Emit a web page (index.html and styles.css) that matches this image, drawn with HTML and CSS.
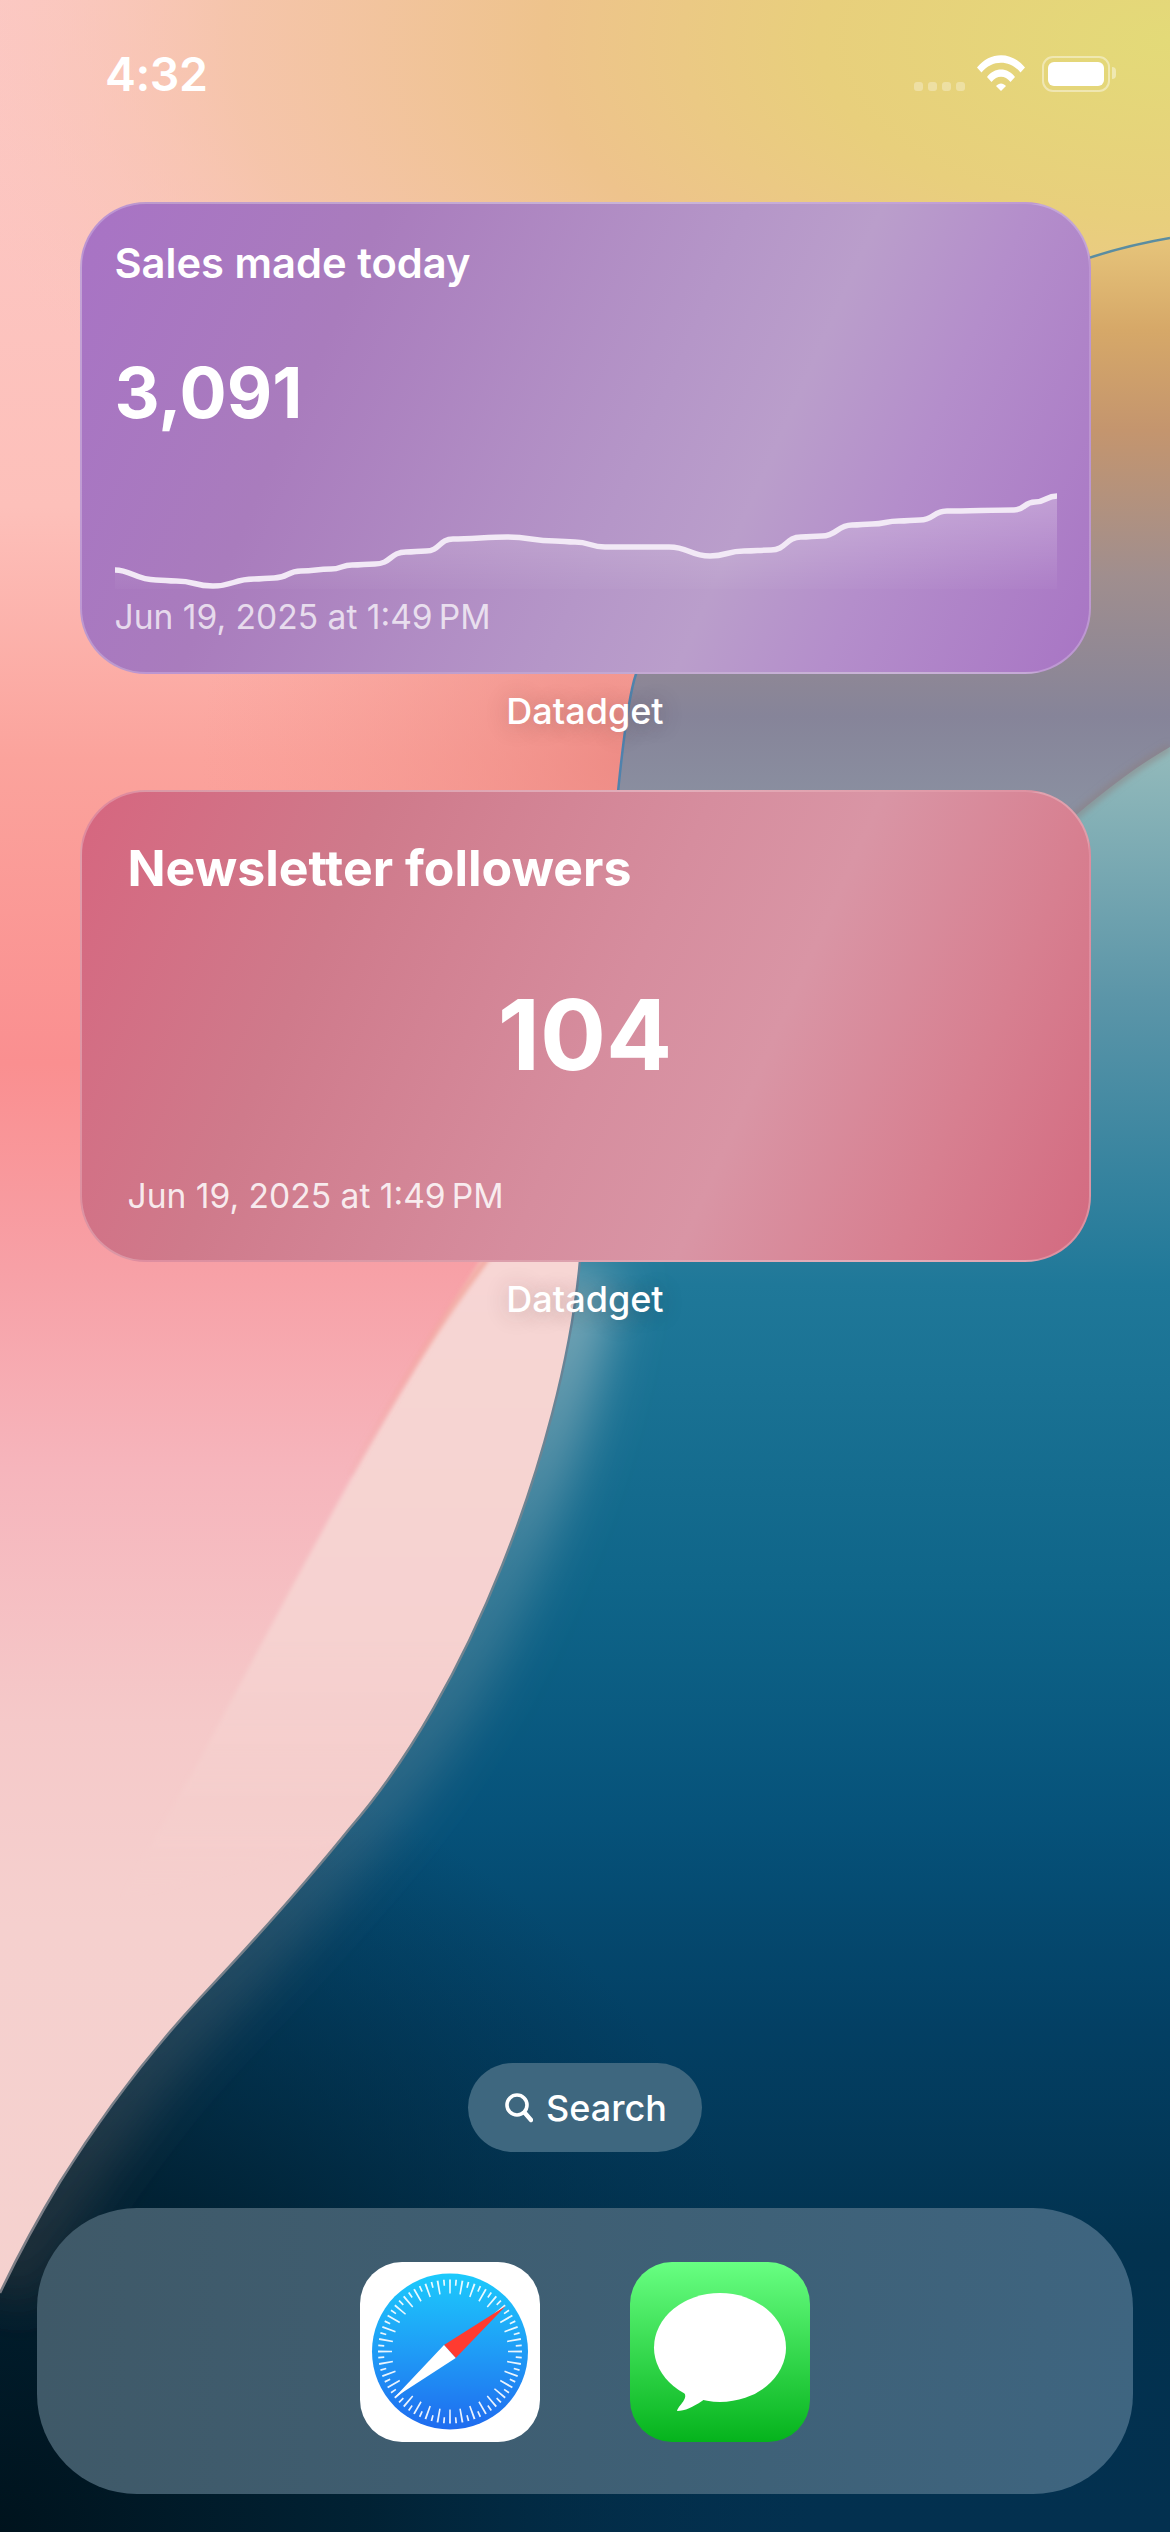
FILE: index.html
```html
<!DOCTYPE html>
<html lang="en">
<head>
<meta charset="utf-8">
<title>Home Screen</title>
<link rel="stylesheet" href="styles.css">
</head>
<body>
<main class="screen">
  <svg class="wallpaper" viewBox="0 0 1170 2532" aria-hidden="true">
    <defs>
      <linearGradient id="pinkV" x1="0" y1="0" x2="0" y2="2532" gradientUnits="userSpaceOnUse">
        <stop offset="0" stop-color="#fcc9c6"/>
        <stop offset="0.2" stop-color="#fdc0ba"/>
        <stop offset="0.3" stop-color="#fba39c"/>
        <stop offset="0.42" stop-color="#fa8f90"/>
        <stop offset="0.5" stop-color="#f7a0a6"/>
        <stop offset="0.58" stop-color="#f6b5bc"/>
        <stop offset="0.68" stop-color="#f5c9c9"/>
        <stop offset="0.76" stop-color="#f5d0ce"/>
        <stop offset="1" stop-color="#f5d2cf"/>
      </linearGradient>
      <radialGradient id="sun" cx="0" cy="0" r="1" gradientUnits="userSpaceOnUse" gradientTransform="translate(1170 40) scale(1250 640)">
        <stop offset="0" stop-color="#e3da78"/>
        <stop offset="0.28" stop-color="#e8cf7c"/>
        <stop offset="0.5" stop-color="#eec38c"/>
        <stop offset="0.75" stop-color="#f4c4a6" stop-opacity="0.85"/>
        <stop offset="1" stop-color="#fbc6bc" stop-opacity="0"/>
      </radialGradient>
      <radialGradient id="salmon" cx="620" cy="760" r="420" gradientUnits="userSpaceOnUse">
        <stop offset="0" stop-color="#ea857f" stop-opacity="0.75"/>
        <stop offset="1" stop-color="#f59a90" stop-opacity="0"/>
      </radialGradient>
      <linearGradient id="bandV" x1="0" y1="240" x2="0" y2="800" gradientUnits="userSpaceOnUse">
        <stop offset="0" stop-color="#e6c47a"/>
        <stop offset="0.16" stop-color="#d6a868"/>
        <stop offset="0.34" stop-color="#c4956e"/>
        <stop offset="0.6" stop-color="#a08e8e"/>
        <stop offset="0.85" stop-color="#868499"/>
        <stop offset="1" stop-color="#8a8fa0"/>
      </linearGradient>
      <linearGradient id="blueV" x1="0" y1="750" x2="0" y2="2532" gradientUnits="userSpaceOnUse">
        <stop offset="0" stop-color="#93babb"/>
        <stop offset="0.14" stop-color="#5b95a8"/>
        <stop offset="0.3" stop-color="#1f7899"/>
        <stop offset="0.47" stop-color="#0f6589"/>
        <stop offset="0.6" stop-color="#06527a"/>
        <stop offset="0.72" stop-color="#033f63"/>
        <stop offset="0.84" stop-color="#02324f"/>
        <stop offset="1" stop-color="#03304f"/>
      </linearGradient>
      <radialGradient id="corner" cx="0" cy="2532" r="820" gradientUnits="userSpaceOnUse">
        <stop offset="0" stop-color="#00131d"/>
        <stop offset="0.45" stop-color="#012031" stop-opacity="0.9"/>
        <stop offset="1" stop-color="#02304c" stop-opacity="0"/>
      </radialGradient>
      <linearGradient id="glow" x1="0" y1="1250" x2="0" y2="2293" gradientUnits="userSpaceOnUse">
        <stop offset="0" stop-color="#b8cccf" stop-opacity="0.7"/>
        <stop offset="0.3" stop-color="#a4b8c0" stop-opacity="0.32"/>
        <stop offset="0.6" stop-color="#8a8c90" stop-opacity="0.26"/>
        <stop offset="1" stop-color="#4c4646" stop-opacity="0.4"/>
      </linearGradient>
      <linearGradient id="edge" x1="0" y1="240" x2="0" y2="2293" gradientUnits="userSpaceOnUse">
        <stop offset="0" stop-color="#5b8da0"/>
        <stop offset="0.25" stop-color="#4f82ad"/>
        <stop offset="0.6" stop-color="#6c8492"/>
        <stop offset="1" stop-color="#7c7c84"/>
      </linearGradient>
      <linearGradient id="ridgeFill" x1="0" y1="1250" x2="0" y2="1900" gradientUnits="userSpaceOnUse">
        <stop offset="0" stop-color="#f7d6d4"/>
        <stop offset="0.6" stop-color="#f6d2d0"/>
        <stop offset="1" stop-color="#f5d2cf" stop-opacity="0"/>
      </linearGradient>
      <linearGradient id="ridgeEdge" x1="0" y1="1250" x2="0" y2="1560" gradientUnits="userSpaceOnUse">
        <stop offset="0" stop-color="#f09a8e" stop-opacity="0.75"/>
        <stop offset="1" stop-color="#f4b4b4" stop-opacity="0"/>
      </linearGradient>
      <filter id="soft" x="-30%" y="-30%" width="160%" height="160%"><feGaussianBlur stdDeviation="26"/></filter>
      <filter id="softer" x="-30%" y="-30%" width="160%" height="160%"><feGaussianBlur stdDeviation="3"/></filter>
      <filter id="faint" x="-10%" y="-10%" width="120%" height="120%"><feGaussianBlur stdDeviation="2"/></filter>
      <clipPath id="deep">
        <path d="M1170 238C990 268 745 410 636 674C615 735 600 1050 579 1271C560 1450 470 1690 350 1828C300 1890 250 1945 200 1998C150 2052 100 2118 60 2182C40 2215 18 2255 0 2293V2532H1170Z"/>
      </clipPath>
    </defs>
    <rect width="1170" height="2532" fill="url(#pinkV)"/>
    <rect width="1170" height="900" fill="url(#sun)"/>
    <rect y="300" width="1170" height="900" fill="url(#salmon)"/>
    <path d="M495 1240C400 1380 290 1590 200 1760L120 1900L500 1800L640 1240Z" fill="url(#ridgeFill)" filter="url(#faint)"/>
    <path d="M495 1248C440 1320 395 1395 350 1475" fill="none" stroke="url(#ridgeEdge)" stroke-width="6" filter="url(#faint)"/>
    <g clip-path="url(#deep)">
      <rect width="1170" height="2532" fill="url(#bandV)"/>
      <path d="M1170 747C1130 770 1100 795 1070 820C1000 870 700 950 400 1200L0 1600V2532H1170Z" fill="url(#blueV)"/>
      <path d="M1170 747C1130 770 1100 795 1070 820" fill="none" stroke="#8a7d80" stroke-width="8" stroke-opacity="0.55" filter="url(#softer)"/>
      <rect y="1700" width="1170" height="832" fill="url(#corner)"/>
      <path d="M579 1271C560 1450 470 1690 350 1828C300 1890 250 1945 200 1998C150 2052 100 2118 60 2182C40 2215 18 2255 0 2293" fill="none" stroke="url(#glow)" stroke-width="70" filter="url(#soft)"/>
    </g>
    <path d="M1170 238C990 268 745 410 636 674C615 735 600 1050 579 1271C560 1450 470 1690 350 1828C300 1890 250 1945 200 1998C150 2052 100 2118 60 2182C40 2215 18 2255 0 2293" fill="none" stroke="url(#edge)" stroke-width="2.5"/>
  </svg>

  <header class="status">
    <span class="time">4:32</span>
    <div class="status-icons">
      <div class="signal"><i></i><i></i><i></i><i></i></div>
      <svg class="wifi" viewBox="0 0 48 36" aria-hidden="true">
        <path d="M0 12.5C13-4 35-4 48 12.5L43.5 17.5C33 4.5 15 4.5 4.5 17.5Z"/>
        <path d="M10 22C17 12 31 12 38 22L33.5 27C28 20 20 20 14.5 27Z"/>
        <path d="M19 31C22 27.5 26 27.5 29 31L24 36Z"/>
      </svg>
      <div class="battery"><div class="battery-level"></div></div>
    </div>
  </header>

  <section class="widgets">
    <article class="widget-block">
      <div class="card card-sales">
        <h2 class="sales-title">Sales made today</h2>
        <p class="sales-value">3,091</p>
        <svg class="chart" viewBox="114 490 942 100" aria-hidden="true">
          <defs>
            <linearGradient id="areaFill" x1="0" y1="497" x2="0" y2="590" gradientUnits="userSpaceOnUse">
              <stop offset="0" stop-color="#fff" stop-opacity="0.26"/>
              <stop offset="1" stop-color="#fff" stop-opacity="0.02"/>
            </linearGradient>
          </defs>
          <path fill="url(#areaFill)" d="M114 571C130 571 135 581 155 581C165 581 165 582 175 582C195 582 192 587 212 587C232 587 233 580 253 580C263 580 263 579 273 579C287 579 286 572 300 572C315 572 315 570 330 570C340 570 341 566 351 566C362 566 363 565 374 565C390 565 389 553 405 553C415 553 415 552 425 552C439 552 438 540 452 540C470 540 488 538 506 538C530 538 530 542 554 542C564 542 564 543 574 543C589 543 589 548 604 548C625 548 647 548 668 548C688 548 689 557 709 557C726 557 726 552 743 552C757 552 756 551 770 551C785 551 785 538 800 538C810 538 811 537 821 537C836 537 836 526 851 526C861 526 861 525 871 525C885 525 884 522 898 522C908 522 909 521 919 521C933 521 932 512 946 512C968 512 991 511 1013 511C1024 511 1023 503 1034 503C1045 503 1045 497 1056 497V590H114Z"/>
          <path fill="none" stroke="#f2e9f6" stroke-width="5.5" d="M114 571C130 571 135 581 155 581C165 581 165 582 175 582C195 582 192 587 212 587C232 587 233 580 253 580C263 580 263 579 273 579C287 579 286 572 300 572C315 572 315 570 330 570C340 570 341 566 351 566C362 566 363 565 374 565C390 565 389 553 405 553C415 553 415 552 425 552C439 552 438 540 452 540C470 540 488 538 506 538C530 538 530 542 554 542C564 542 564 543 574 543C589 543 589 548 604 548C625 548 647 548 668 548C688 548 689 557 709 557C726 557 726 552 743 552C757 552 756 551 770 551C785 551 785 538 800 538C810 538 811 537 821 537C836 537 836 526 851 526C861 526 861 525 871 525C885 525 884 522 898 522C908 522 909 521 919 521C933 521 932 512 946 512C968 512 991 511 1013 511C1024 511 1023 503 1034 503C1045 503 1045 497 1056 497"/>
        </svg>
        <p class="date date-sales">Jun 19, 2025 at 1:49&#8239;PM</p>
      </div>
      <p class="widget-label">Datadget</p>
    </article>

    <article class="widget-block">
      <div class="card card-news">
        <h2 class="news-title">Newsletter followers</h2>
        <p class="news-value">104</p>
        <p class="date date-news">Jun 19, 2025 at 1:49&#8239;PM</p>
      </div>
      <p class="widget-label">Datadget</p>
    </article>
  </section>

  <div class="search">
    <svg class="search-icon" viewBox="0 0 28 30" aria-hidden="true">
      <circle cx="12" cy="12" r="10" fill="none" stroke="#fff" stroke-width="3.6"/>
      <path d="M19.5 19.5L26 27" fill="none" stroke="#fff" stroke-width="4.4" stroke-linecap="round"/>
    </svg>
    <span>Search</span>
  </div>

  <nav class="dock">
    <svg class="app-icon" viewBox="0 0 180 180" aria-label="Safari">
      <defs>
        <linearGradient id="safariBlue" x1="0" y1="0" x2="0" y2="1">
          <stop offset="0" stop-color="#1ccafc"/>
          <stop offset="0.5" stop-color="#1f9cf6"/>
          <stop offset="1" stop-color="#1f6bef"/>
        </linearGradient>
      </defs>
      <rect width="180" height="180" rx="42" fill="#fff"/>
      <circle cx="90" cy="89.5" r="78" fill="url(#safariBlue)"/>
      <circle cx="90" cy="89.5" r="65" fill="none" stroke="#fff" stroke-opacity="0.9" stroke-width="14" pathLength="360" stroke-dasharray="1.5 8.5" stroke-dashoffset="0.75"/>
      <circle cx="90" cy="89.5" r="69" fill="none" stroke="#fff" stroke-opacity="0.9" stroke-width="6" pathLength="360" stroke-dasharray="1.4 8.6" stroke-dashoffset="-4.3"/>
      <path d="M145.7 44L84 83L95.7 96Z" fill="#ff3b30"/>
      <path d="M34 136L84 83L95.7 96Z" fill="#fff"/>
    </svg>
    <svg class="app-icon" viewBox="0 0 180 180" aria-label="Messages">
      <defs>
        <linearGradient id="msgGreen" x1="0" y1="0" x2="0" y2="1">
          <stop offset="0" stop-color="#68ff82"/>
          <stop offset="1" stop-color="#05b31c"/>
        </linearGradient>
      </defs>
      <rect width="180" height="180" rx="42" fill="url(#msgGreen)"/>
      <ellipse cx="90" cy="85.5" rx="66" ry="54.5" fill="#fff"/>
      <path d="M46 122C55 130 57 133 54 138C52 142 48 145 47 149C55 149 63 145 72 139L84 130Z" fill="#fff"/>
    </svg>
  </nav>
</main>
</body>
</html>
```
FILE: styles.css
```css
* { box-sizing: border-box; margin: 0; padding: 0; }

html, body { width: 1170px; height: 2532px; overflow: hidden; }

body {
  font-family: Inter, "Liberation Sans", sans-serif;
  color: #fff;
  background: #02304c;
}

.screen {
  position: relative;
  width: 1170px;
  height: 2532px;
  display: flex;
  flex-direction: column;
  align-items: center;
}

.wallpaper {
  position: absolute;
  inset: 0;
  width: 1170px;
  height: 2532px;
}

.status {
  position: relative;
  width: 100%;
  height: 202px;
  padding: 47px 60px 0 105px;
  display: flex;
  justify-content: space-between;
  align-items: flex-start;
}

.time {
  font-size: 46.5px;
  line-height: 54px;
  font-weight: 600;
  letter-spacing: -0.5px;
}

.status-icons {
  display: flex;
  align-items: flex-start;
  padding-top: 8px;
}

.signal {
  display: flex;
  gap: 5px;
  margin-top: 27px;
  margin-right: 12px;
}

.signal i {
  display: block;
  width: 9px;
  height: 9px;
  border-radius: 3px;
  background: rgba(255, 255, 255, 0.3);
}

.wifi {
  width: 48px;
  height: 36px;
  fill: #fff;
  margin-right: 17px;
}

.battery {
  position: relative;
  width: 68px;
  height: 36px;
  padding: 4px;
  border: 2.5px solid rgba(255, 255, 255, 0.42);
  border-radius: 11px;
  margin-top: 1px;
}

.battery::after {
  content: "";
  position: absolute;
  left: 68px;
  top: 9px;
  width: 4px;
  height: 12px;
  border-radius: 0 6px 6px 0;
  background: rgba(255, 255, 255, 0.42);
}

.battery-level {
  width: 100%;
  height: 100%;
  border-radius: 6px;
  background: #fff;
}

.widgets {
  position: relative;
  display: flex;
  flex-direction: column;
  gap: 22px;
  width: 1011px;
}

.widget-block {
  display: flex;
  flex-direction: column;
  align-items: center;
}

.card {
  width: 1011px;
  height: 472px;
  border-radius: 66px;
  border: 2px solid rgba(255, 255, 255, 0.24);
  display: flex;
  flex-direction: column;
  align-items: flex-start;
}

.card-sales {
  padding: 34px 33px 0;
  background: linear-gradient(114deg, #a873c5 0%, #a97cbd 25%, #b596c8 55%, #ba9ecb 66%, #b48ecb 78%, #a875c4 100%);
}

.card-news {
  padding: 46px 46px 0;
  background: linear-gradient(114deg, #d6667f 0%, #cf7a8b 25%, #d68d9e 52%, #d995a5 66%, #d77f90 84%, #d36a80 100%);
}

.sales-title {
  font-size: 41.7px;
  line-height: 50px;
  font-weight: 600;
}

.sales-value {
  font-size: 70px;
  line-height: 90px;
  font-weight: 700;
  margin-top: 60px;
}

.chart {
  display: block;
  width: 942px;
  height: 100px;
  margin-top: 51px;
  overflow: visible;
}

.date {
  font-size: 33.6px;
  line-height: 40px;
  font-weight: 400;
  color: rgba(255, 255, 255, 0.72);
}

.date-sales { margin-top: 8px; }

.news-title {
  font-size: 50px;
  line-height: 60px;
  font-weight: 700;
}

.news-value {
  align-self: center;
  font-size: 98px;
  line-height: 118px;
  font-weight: 700;
  margin-top: 78px;
}

.date-news {
  margin-top: 82px;
  color: rgba(255, 255, 255, 0.85);
}

.widget-label {
  height: 94px;
  padding-top: 16px;
  font-size: 36px;
  line-height: 42px;
  font-weight: 500;
  text-shadow: 0 2px 22px rgba(60, 40, 40, 0.3);
}

.search {
  position: relative;
  margin-top: auto;
  width: 234px;
  height: 89px;
  padding-left: 2px;
  border-radius: 45px;
  display: flex;
  align-items: center;
  justify-content: center;
  gap: 13px;
  background: #3e677f;
  font-size: 36px;
  font-weight: 500;
}

.search-icon {
  width: 28px;
  height: 30px;
}

.dock {
  position: relative;
  width: 1096px;
  height: 286px;
  padding-top: 2px;
  margin-top: 56px;
  margin-bottom: 38px;
  border-radius: 100px;
  display: flex;
  align-items: center;
  justify-content: center;
  gap: 90px;
  background: linear-gradient(90deg, #3f5968, #3e6580);
}

.app-icon {
  display: block;
  width: 180px;
  height: 180px;
}
```
